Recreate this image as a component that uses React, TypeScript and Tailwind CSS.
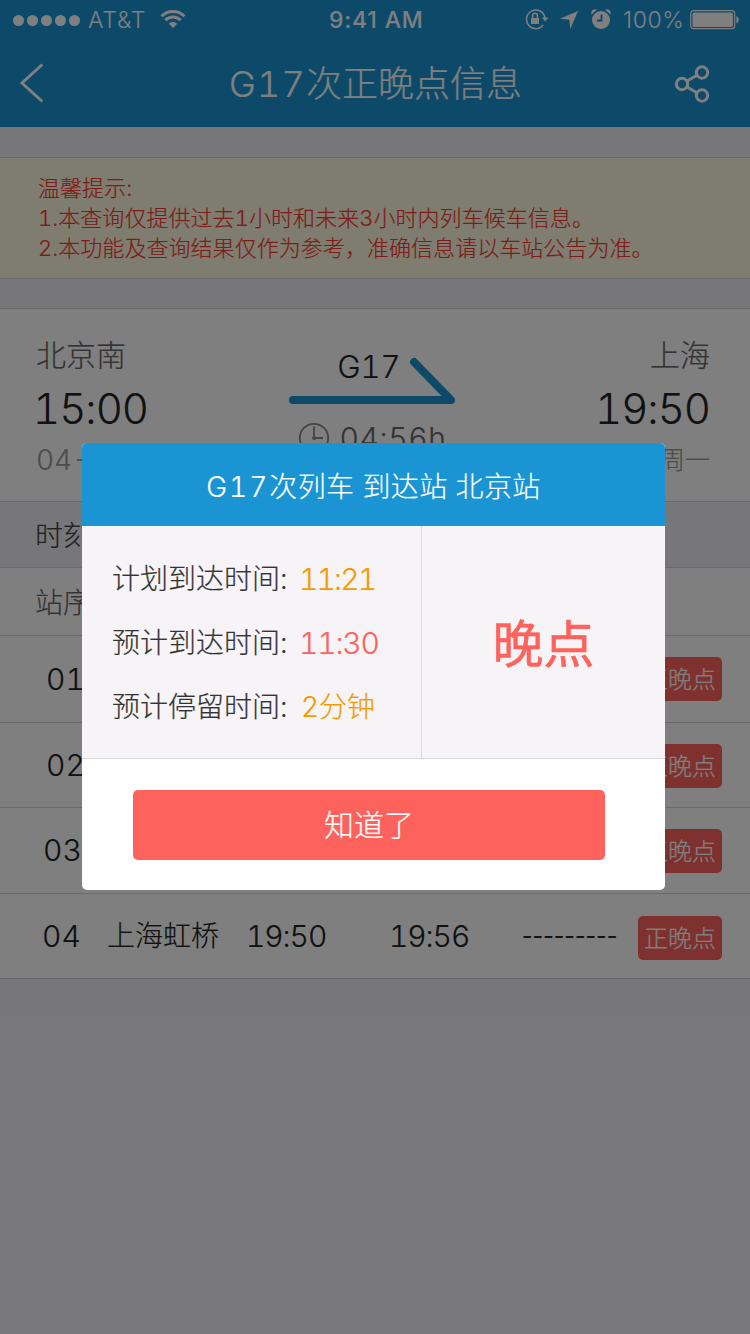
import { useState } from "react";

type Stop = { no: string; name?: string; arrive?: string; depart?: string; stay?: string; noClass: string; badgeClass: string; rowClass: string };

const stops: Stop[] = [
  { no: "01", noClass: "pl-[46px]", badgeClass: "", rowClass: "h-[87px]" },
  { no: "02", noClass: "pl-[46px]", badgeClass: "mt-[2px]", rowClass: "h-[85px]" },
  { no: "03", noClass: "pl-[43px]", badgeClass: "", rowClass: "h-[86px]" },
  { no: "04", name: "上海虹桥", arrive: "19:50", depart: "19:56", stay: "---------", noClass: "pl-[42px]", badgeClass: "mt-[3px]", rowClass: "h-[85px]" },
];

function StatusBar() {
  return (
    <div className="flex h-10 items-center text-[22px] leading-10 normal-nums text-white [-webkit-text-stroke:0]">
      <div className="ml-[13px] flex gap-[3px]">
        {[0, 1, 2, 3, 4].map((i) => (
          <i key={i} className="size-[11px] rounded-full bg-white" />
        ))}
      </div>
      <span className="ml-2 w-[60px] whitespace-nowrap text-[23px] font-light tracking-[0.8px]">AT&amp;T</span>
      <svg className="ml-3 -mt-[2px]" width="26" height="20" viewBox="0 0 26 20" fill="none" stroke="#fff" strokeWidth="3">
        <path d="M1.5 7.2C8 .8 18 .8 24.5 7.2" />
        <path d="M5.3 11.2c4.4-4.2 11-4.2 15.4 0" />
        <path d="M8.8 14.8c2.3-2.3 6.1-2.3 8.4 0L13 19z" fill="#fff" stroke="none" />
      </svg>
      <span className="ml-[143px] w-[96px] whitespace-nowrap text-[23px] font-medium tracking-[0.8px]">9:41 AM</span>
      <svg className="ml-[100px] -mt-[2px]" width="24" height="22" viewBox="0 0 24 22" fill="none" stroke="#fff" strokeWidth="1.5">
        <path d="M18.2 17A9.3 9.3 0 1 1 20 10" />
        <path d="M16.8 9.5h6.7l-3.4 4z" fill="#fff" stroke="none" />
        <path d="M6 10h8v6H6z" fill="#fff" stroke="none" />
        <path d="M7.6 10V7.6a2.4 2.4 0 0 1 4.8 0V10" />
      </svg>
      <svg className="ml-[11px]" width="18" height="18" viewBox="0 0 18 18" fill="#fff">
        <path d="M18 0 10.3 18 9.3 8.7 0 7.7z" />
      </svg>
      <svg className="ml-[13px] -mt-[3px]" width="20" height="20" viewBox="0 0 20 20" fill="#fff">
        <circle cx="10" cy="11" r="9" />
        <path d="M.5 5.5C-.9 2 3-1 5.9.8zM19.5 5.5C20.9 2 17-1 14.1.8z" />
        <path d="M10.5 5.5v6H6" fill="none" stroke="#1a94d2" strokeWidth="1.8" />
      </svg>
      <span className="ml-[12px] w-[61px] whitespace-nowrap text-[23px] font-light tracking-[0.6px]">100%</span>
      <svg className="ml-[6px]" width="49" height="20" viewBox="0 0 49 20" fill="#fff">
        <rect x=".7" y=".7" width="44" height="18" rx="3" fill="none" stroke="#fff" strokeWidth="1.2" />
        <rect x="2.5" y="2.5" width="40.4" height="14.4" rx="1.5" />
        <path d="M46.3 6.3c3.3.6 3.3 6.3 0 7z" />
      </svg>
    </div>
  );
}

function NavBar() {
  return (
    <div className="flex h-[87px] items-center text-white">
      <svg className="ml-5 -mt-[1px]" width="24" height="40" viewBox="0 0 24 40" fill="none" stroke="#fff" strokeWidth="3">
        <path d="M22.3 1.5 2 20l20.3 18.5" />
      </svg>
      <h1 className="ml-[185px] mt-[2px] w-[295px] whitespace-nowrap text-[36px] font-light leading-[87px]">
        <span className="tracking-[1.2px]">G17</span>次正晚点信息
      </h1>
      <svg className="ml-[150px]" width="36" height="40" viewBox="0 0 36 40" fill="none" stroke="#fff" strokeWidth="3">
        <circle cx="8" cy="20" r="5.7" />
        <circle cx="28" cy="8.5" r="5.7" />
        <circle cx="28" cy="31.5" r="5.7" />
        <path d="m13 17 10-5.7M13 23l10 5.7" />
      </svg>
    </div>
  );
}

function TripCard() {
  return (
    <section className="flex h-[194px] justify-between border-y border-[#d4d4d8] bg-white pl-9 pr-10 pt-[26px] font-light">
      <div className="w-[180px]">
        <p className="text-[30px] leading-10 text-[#666]">北京南</p>
        <p className="-ml-[3px] mt-[9px] text-[42px] leading-[50px] tracking-[-1px] text-[#222]">15:00</p>
        <p className="mt-[8px] text-[28px] leading-9 text-[#999]">04-11 周一</p>
      </div>
      <div className="-ml-[1px] w-[170px]">
        <p className="ml-[50px] mt-[11px] text-[31px] leading-[42px] text-[#222]">G17</p>
        <svg className="-mt-[32px]" width="170" height="50" viewBox="0 0 170 50" fill="none" stroke="#1a94d2" strokeWidth="8" strokeLinecap="round" strokeLinejoin="round">
          <path d="M5 44h158L126 6" />
        </svg>
        <div className="mt-[16px] flex items-center">
          <svg className="ml-[10px]" width="32" height="32" viewBox="0 0 32 32" fill="none" stroke="#888" strokeWidth="1.8">
            <circle cx="16" cy="16" r="14.2" />
            <path d="M16 4.5V16h9" />
            <circle cx="16" cy="16" r="1" fill="#888" />
          </svg>
          <span className="ml-[10px] whitespace-nowrap text-[30px] leading-8 tracking-[0.6px] text-[#666]">04:56h</span>
        </div>
      </div>
      <div className="w-[180px] text-right">
        <p className="text-[30px] leading-10 text-[#666]">上海</p>
        <p className="mt-[9px] text-[42px] leading-[50px] tracking-[-1px] text-[#222]">19:50</p>
        <p className="mt-[8px] text-[25px] leading-9 text-[#999]">04-11 周一</p>
      </div>
    </section>
  );
}

function StopRow({ stop }: { stop: Stop }) {
  return (
    <div className={"flex items-center border-b border-[#d4d4d8] font-light text-[#222] " + stop.rowClass}>
      <span className={"w-[107px] text-[30px] " + stop.noClass}>{stop.no}</span>
      <span className="w-[139px] text-[28px]">{stop.name}</span>
      <span className="w-[143px] text-[30px] tracking-[-1.1px]">{stop.arrive}</span>
      <span className="w-[133px] text-[30px] tracking-[-1.1px]">{stop.depart}</span>
      <span className="w-[116px] whitespace-nowrap text-[23px] font-normal normal-nums">{stop.stay}</span>
      <button className={"h-11 w-[84px] shrink-0 rounded-[5px] bg-[#fd635c] text-[24px] leading-[46px] text-white " + stop.badgeClass}>正晚点</button>
    </div>
  );
}

function ArrivalDialog({ onClose }: { onClose: () => void }) {
  return (
    <div className="absolute inset-0 bg-black/50 pl-[82px] pt-[443px]">
      <div className="h-[447px] w-[583px] overflow-hidden rounded-[5px] bg-white">
        <h2 className="h-[83px] bg-[#1a94d2] text-center text-[28px] font-light leading-[88px] tracking-[0.4px] text-white">
          <span className="tracking-[2px]">G17</span>次列车 到达站 北京站
        </h2>
        <div className="flex h-[233px] border-b border-[#d9d9db] bg-[#f6f4f6]">
          <dl className="w-[340px] border-r border-[#d9d9db] pl-[30px] pt-[21px] text-[28px] font-light leading-[64px] text-[#333]">
            <div className="flex">
              <dt className="w-[187px]">计划到达时间:</dt>
              <dd className="text-[30px] tracking-[-1.9px] text-[#f59a00]">11:21</dd>
            </div>
            <div className="flex">
              <dt className="w-[187px]">预计到达时间:</dt>
              <dd className="text-[30px] tracking-[-1.2px] text-[#fd635c]">11:30</dd>
            </div>
            <div className="flex">
              <dt className="w-[189px]">预计停留时间:</dt>
              <dd className="text-[#f59a00]">2分钟</dd>
            </div>
          </dl>
          <p className="flex-1 pt-[2px] text-center text-[51px] font-normal leading-[233px] text-[#fd635c] [-webkit-text-stroke:0.6px]">晚点</p>
        </div>
        <button onClick={onClose} className="ml-[51px] mt-[31px] h-[70px] w-[472px] rounded-[5px] bg-[#fd635c] text-[30px] font-light leading-[70px] text-white">
          知道了
        </button>
      </div>
    </div>
  );
}

export default function App() {
  const [open, setOpen] = useState(true);

  return (
    <main className="relative h-[1334px] w-[750px] overflow-hidden bg-[#efeff4] font-['Inter','Noto_Sans_CJK_SC',sans-serif] tabular-nums [-webkit-text-stroke:0.2px]">
      <header className="h-[127px] bg-[#1a94d2]">
        <StatusBar />
        <NavBar />
      </header>

      <section className="mt-[30px] h-[122px] whitespace-nowrap border-y border-[#d4d4d8] bg-[#fffbe0] pl-[38px] pt-[15px] text-[22px] font-light leading-[30px] tracking-[0.05px] text-[#f93a34]">
        <p>温馨提示:</p>
        <p>1.本查询仅提供过去1小时和未来3小时内列车候车信息。</p>
        <p>2.本功能及查询结果仅作为参考，准确信息请以车站公告为准。</p>
      </section>

      <div className="h-[29px]" />
      <TripCard />

      <h2 className="h-[66px] border-b border-[#d4d4d8] pl-[35px] text-[28px] font-light leading-[68px] text-[#444]">时刻</h2>

      <div className="bg-white">
        <div className="h-[68px] border-b border-[#d4d4d8] pl-[35px] text-[28px] font-light leading-[71px] text-[#666]">站序</div>
        {stops.map((s) => (
          <StopRow key={s.no} stop={s} />
        ))}
      </div>

      {open && <ArrivalDialog onClose={() => setOpen(false)} />}
    </main>
  );
}
